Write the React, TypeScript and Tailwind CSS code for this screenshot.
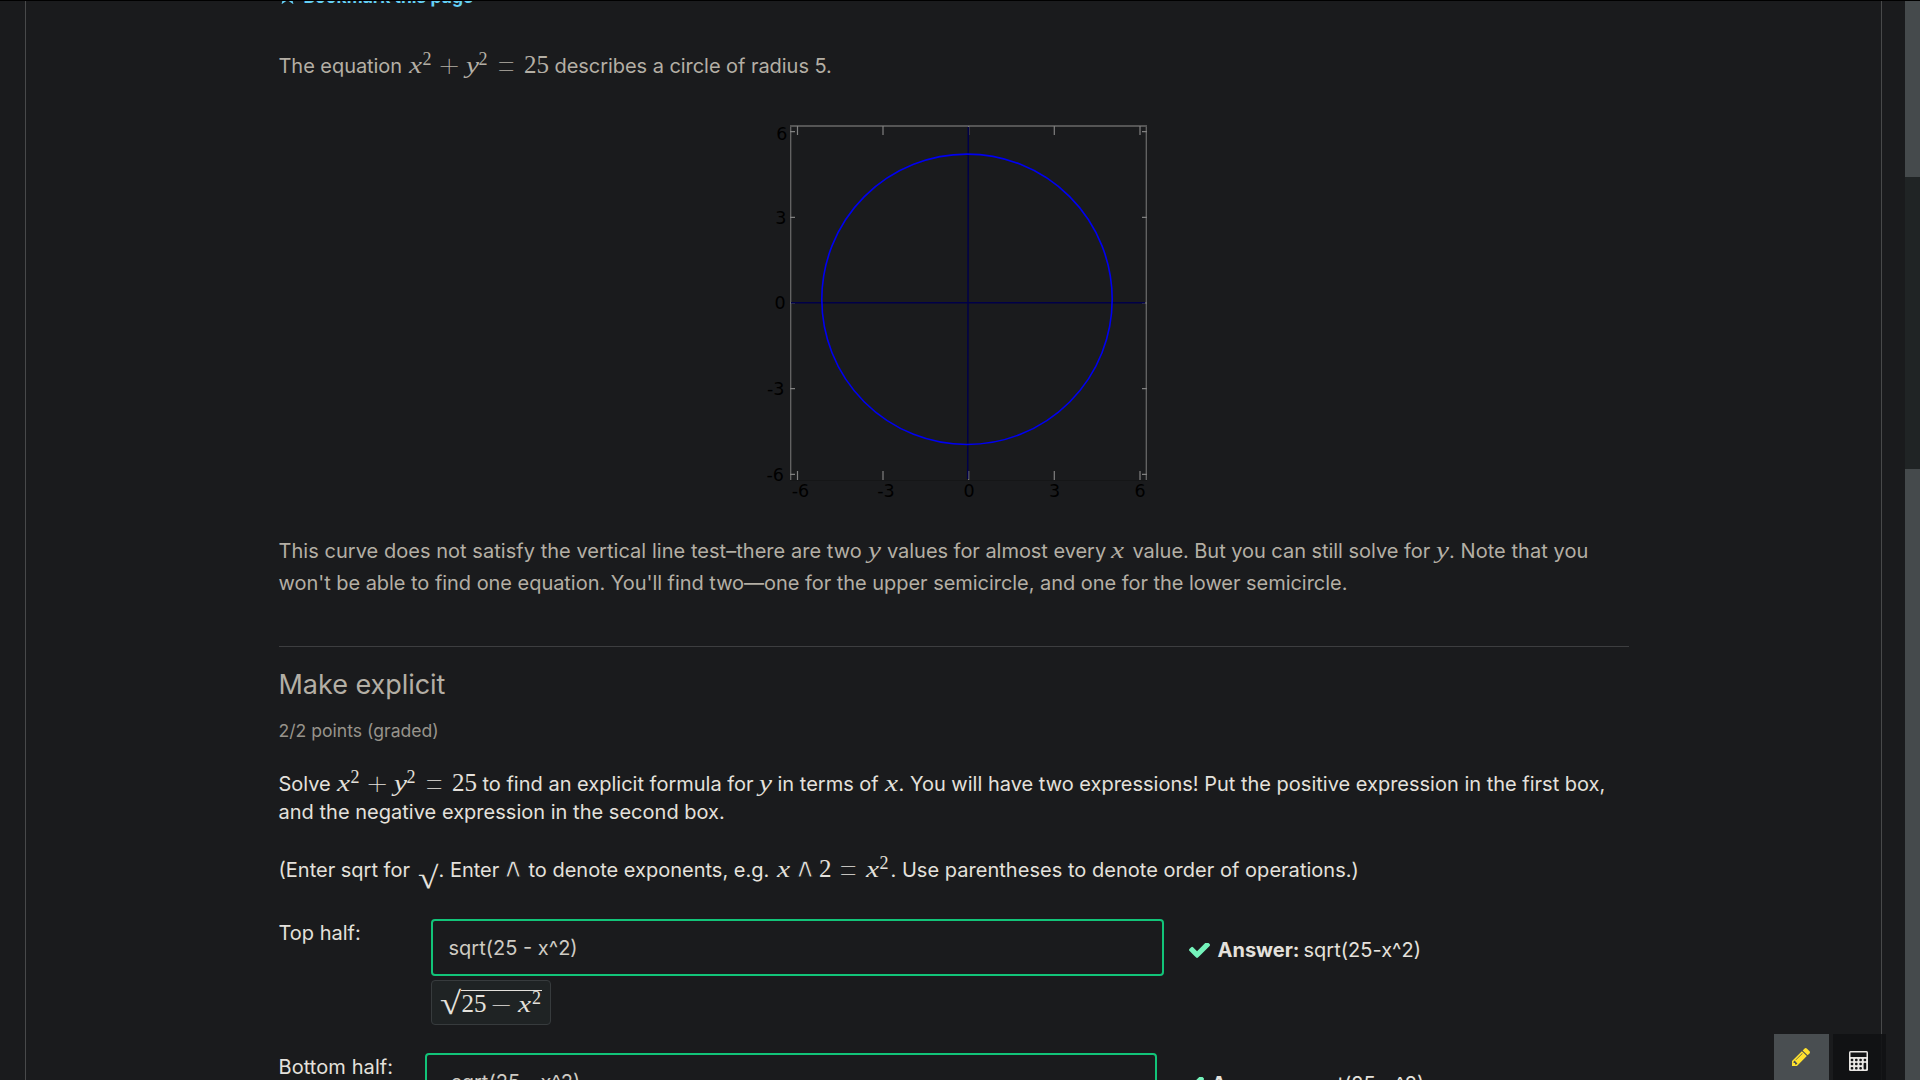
import React from "react";

type Kids = { children: React.ReactNode };
type SegProps = { w: string; children: React.ReactNode };

/* Text run with a fixed advance, so the formulas between runs keep their place. */
const Seg = ({ w, children }: SegProps) => (
  <span className={`shrink-0 whitespace-pre ${w}`}>{children}</span>
);

const Var = ({ w, children }: SegProps) => (
  <span className={`shrink-0 whitespace-pre font-['Liberation_Serif',serif] text-[23.5px] leading-[0] italic ${w}`}>
    <span className="inline-block origin-left scale-x-[1.25]">{children}</span>
  </span>
);

const Num = ({ w, children }: SegProps) => (
  <span className={`shrink-0 whitespace-pre font-['Liberation_Serif',serif] text-[25px] leading-[0] ${w}`}>
    <span className="relative left-[0.5px]">{children}</span>
  </span>
);

const Sup = ({ w, children }: SegProps) => (
  <span className={`relative -top-[8.5px] shrink-0 font-['Liberation_Serif',serif] text-[18px] leading-[0] ${w}`}>{children}</span>
);

const Op = ({ w, children }: SegProps) => (
  <span className={`relative top-[4px] -left-[4px] shrink-0 font-['Inter',sans-serif] text-[37px] leading-[0] font-thin ${w}`}>
    <span className="inline-block origin-left scale-x-[1.12]">{children}</span>
  </span>
);

const Wedge = ({ w }: { w: string }) => (
  <span className={`relative -left-[4px] shrink-0 font-['DejaVu_Sans',sans-serif] text-[27px] leading-[0] [-webkit-text-stroke:0.9px_#1a1b1d] ${w}`}>
    <span className="inline-block origin-left scale-x-[1.12]">∧</span>
  </span>
);

const Circle25 = () => (
  <>
    <Var w="w-[14px]">x</Var>
    <Sup w="w-[17px]">2</Sup>
    <Op w="w-[26px]">+</Op>
    <Var w="w-[13px]">y</Var>
    <Sup w="w-[18px]">2</Sup>
    <Op w="w-[27px]">=</Op>
    <Num w="w-[31px]">25</Num>
  </>
);

const Line = ({ children }: Kids) => <div className="flex items-baseline">{children}</div>;

const tickX = [
  [47.5, "-6", 50.5],
  [133, "-3", 136],
  [218.7, "0", 219],
  [304.3, "3", 304.5],
  [390, "6", 390],
] as const;
const tickY = [
  [21.7, "6", 37.5, 30],
  [107.3, "3", 36.5, 114],
  [193, "0", 35.7, 198.5],
  [278.7, "-3", 34.5, 284.5],
  [364.3, "-6", 34, 370.5],
] as const;

const Plot = () => (
  <svg width="410" height="400" viewBox="0 0 410 400" fill="none">
    <path d="M40.7 15v355.5M396.3 15v355.5" stroke="#666666" strokeWidth="1.3" />
    <path d="M40 16h357" stroke="#555555" strokeWidth="1.8" />
    <path d="M40 370.5h357" stroke="#151617" strokeWidth="1" />
    {tickX.map(([x]) => (
      <path key={x} d={`M${x} 16v9M${x} 361v9`} stroke="#808080" strokeWidth="1.2" />
    ))}
    {tickY.map(([y]) => (
      <path key={y} d={`M40 ${y}h5M392 ${y}h5`} stroke="#808080" strokeWidth="1.2" />
    ))}
    <path d="M218.3 17L217.7 369M41 192.7H395" stroke="#000048" strokeWidth="1.5" />
    <ellipse cx="217" cy="189.3" rx="145.2" ry="145.2" stroke="#0000f0" strokeWidth="1.6" />
    <g fill="#000000" fontFamily="DejaVu Sans" fontSize="17.5" textAnchor="middle">
      {tickX.map(([x, t, cx]) => (
        <text key={x} x={cx} y="387">{t}</text>
      ))}
    </g>
    <g fill="#000000" fontFamily="DejaVu Sans" fontSize="17.5" textAnchor="end">
      {tickY.map(([y, t, ex, by]) => (
        <text key={y} x={ex} y={by}>{t}</text>
      ))}
    </g>
  </svg>
);

const Check = () => (
  <svg className="mr-[8px] shrink-0 self-center text-[#75f3bb]" width="21" height="15" viewBox="121 418 1550 1104" fill="currentColor">
    <path d="M1671 566q0 40-28 68l-724 724-136 136q-28 28-68 28t-68-28l-136-136-362-362q-28-28-28-68t28-68l136-136q28-28 68-28t68 28l294 295 656-657q28-28 68-28t68 28l136 136q28 28 28 68z" />
  </svg>
);

const Pencil = () => (
  <svg className="text-[#ffe22e]" width="18" height="18" viewBox="128 149 1515 1515" fill="currentColor">
    <path d="M491 1536l91-91-235-235-91 91v107h128v128h107zm523-928q0-22-22-22-10 0-17 7l-542 542q-7 7-7 17 0 22 22 22 10 0 17-7l542-542q7-7 7-17zm-54-192l416 416-832 832h-416v-416zm683 96q0 53-37 90l-166 166-416-416 166-165q36-38 90-38 53 0 91 38l235 234q37 39 37 91z" />
  </svg>
);

const Answer = ({ children }: Kids) => (
  <div className="flex items-baseline text-[20px] leading-[28px] text-[#e4e1dc]">
    <Check />
    <b className="mr-[4px] font-bold">Answer:</b>
    <span>{children}</span>
  </div>
);

export default function App() {
  return (
    <div className="flex h-[1080px] w-[1920px] overflow-hidden border-t border-black bg-[#1a1b1d] font-['Inter',sans-serif] text-[20px] text-[#b4afa5]">
      <div className="ml-[25px] h-full w-[1857px] shrink-0 overflow-hidden border-x border-[#48494a] pl-[252.5px]">
        <div className="-mt-[17px] flex h-[26px] items-center gap-[8px] text-[17.5px] leading-[26px] font-bold text-[#65d0f5]">
          <svg className="-mt-[4px]" width="17" height="18" viewBox="0 0 17 18" fill="none" stroke="currentColor" strokeWidth="2">
            <path d="M8.5 2l2 4.8 5 .4-3.8 3.4 1.2 5.4-4.4-3-4.4 3 1.2-5.4L1.5 7.2l5-.4z" />
          </svg>
          Bookmark this page
        </div>

        <div className="mt-[40px] h-[32px] leading-[32px] tracking-[-0.05px]">
          <Line>
            <Seg w="w-[130px]">The equation</Seg>
            <Circle25 />
            <Seg w="w-auto">describes a circle of radius 5.</Seg>
          </Line>
        </div>

        <div className="mt-[28px] ml-[471.5px] h-[400px]">
          <Plot />
        </div>

        <div className="mt-[25px] leading-[32px] tracking-[-0.04px]">
          <Line>
            <Seg w="w-[589.5px] tracking-[0.04px]">This curve does not satisfy the vertical line test–there are two</Seg>
            <Var w="w-[19px]">y</Var>
            <Seg w="w-[224px]">values for almost every</Seg>
            <Var w="w-[21.5px]">x</Var>
            <Seg w="w-[303.5px]">value. But you can still solve for</Seg>
            <Var w="w-[13px]">y</Var>
            <Seg w="w-auto tracking-[0.06px]">. Note that you</Seg>
          </Line>
          <Line>
            <Seg w="w-auto">won't be able to find one equation. You'll find two—one for the upper semicircle, and one for the lower semicircle.</Seg>
          </Line>
        </div>

        <div className="mt-[47px] ml-[0.5px] w-[1350px] border-t border-[#3d3e40]" />
        <h3 className="mt-[20px] text-[27px] leading-[36px] tracking-[-0.04px]">Make explicit</h3>
        <p className="mt-[14px] text-[17.6px] leading-[28px] text-[#97938b]">2/2 points (graded)</p>

        <div className="mt-[25px] leading-[28px] text-[#e4e1dc]">
          <Line>
            <Seg w="w-[58px]">Solve</Seg>
            <Circle25 />
            <Seg w="w-[276px]">to find an explicit formula for</Seg>
            <Var w="w-[19px]">y</Var>
            <Seg w="w-[107px]">in terms of</Seg>
            <Var w="w-[14px]">x</Var>
            <Seg w="w-auto">. You will have two expressions! Put the positive expression in the first box,</Seg>
          </Line>
          <Line>
            <Seg w="w-auto tracking-[0.02px]">and the negative expression in the second box.</Seg>
          </Line>
        </div>

        <div className="mt-[30px] leading-[28px] text-[#e4e1dc]">
          <Line>
            <Seg w="w-[139px]">(Enter sqrt for</Seg>
            <span className="relative top-[11px] w-[21px] shrink-0 origin-left scale-x-[1.2] font-['Liberation_Serif',serif] text-[31px] leading-[0]">√</span>
            <Seg w="w-[67px]">. Enter</Seg>
            <Wedge w="w-[23px]" />
            <Seg w="w-[248px]">to denote exponents, e.g.</Seg>
            <Var w="w-[21px]">x</Var>
            <Wedge w="w-[21px]" />
            <Num w="w-[20px]">2</Num>
            <Op w="w-[27px]">=</Op>
            <Var w="w-[14px]">x</Var>
            <Sup w="w-[11px]">2</Sup>
            <Seg w="w-auto tracking-[0.03px]">. Use parentheses to denote order of operations.)</Seg>
          </Line>
        </div>

        <div className="mt-[35px] flex h-[134px] items-start text-[#e4e1dc]">
          <div className="w-[152.5px] leading-[28px]">Top half:</div>
          <div>
            <div className="flex h-[57px] w-[733px] items-center rounded-[4px] border-2 border-[#12c479] pl-[15.5px] leading-[28px] text-[#cfcbc3]">
              sqrt(25 - x^2)
            </div>
            <div className="mt-[4px] flex h-[45px] w-[120px] items-baseline rounded-[4px] border border-[#373b3d] bg-[#1f2324] pt-[9px] pl-[8px]">
              <span className="relative top-[2px] w-[21px] origin-left scale-x-[1.2] font-['Liberation_Serif',serif] text-[32px] leading-[0]">√</span>
              <span className="flex w-[81px] items-baseline border-t border-[#e4e1dc] pt-[8px]">
                <Num w="w-[31px]">25</Num>
                <Op w="w-[26px]">−</Op>
                <Var w="w-[14px]">x</Var>
                <Sup w="w-[9px]">2</Sup>
              </span>
            </div>
          </div>
          <div className="mt-[17px] ml-[24.5px]">
            <Answer>sqrt(25-x^2)</Answer>
          </div>
        </div>
        <div className="flex items-start text-[#e4e1dc]">
          <div className="w-[146.5px] leading-[28px] tracking-[0.08px]">Bottom half:</div>
          <div className="flex h-[57px] w-[732px] items-center rounded-[4px] border-2 border-[#12c479] pl-[15px] leading-[28px] text-[#cfcbc3]">
            -sqrt(25 - x^2)
          </div>
          <div className="mt-[17px] ml-[25.5px]">
            <Answer>-sqrt(25-x^2)</Answer>
          </div>
        </div>
      </div>

      <div className="ml-auto w-[15px] bg-[#202425]">
        <div className="h-[176px] bg-[#454a4c]" />
        <div className="mt-[292px] h-[611px] bg-[#454a4c]" />
      </div>

      <div className="absolute top-[1034px] left-[1774px] flex h-[46px] gap-[4px]">
        <div className="flex w-[55px] justify-center bg-[#494e51] pt-[14px] pr-[1px]">
          <Pencil />
        </div>
        <div className="flex w-[53px] justify-center bg-[#111214]/90 pt-[17px] pr-[2px]">
          <svg width="19" height="20" viewBox="0 0 19 20">
            <rect width="19" height="20" rx="1.5" fill="#e8e6e3" />
            <rect x="1.5" y="1.5" width="16" height="4.5" fill="#121315" />
            {[7.7, 11.8, 15.9].map((y) =>
              [1.7, 6, 10.3].map((x) => <rect key={`${x}-${y}`} x={x} y={y} width="2.6" height="2.5" rx="1" fill="#121315" />)
            )}
            <rect x="14.6" y="7.7" width="2.6" height="2.5" rx="1" fill="#121315" />
            <rect x="14.6" y="11.8" width="2.6" height="6.6" rx="1" fill="#121315" />
          </svg>
        </div>
      </div>
    </div>
  );
}
